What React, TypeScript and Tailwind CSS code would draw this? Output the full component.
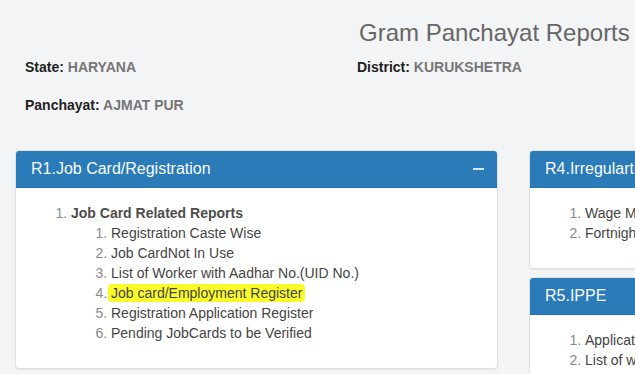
import React from "react";

interface Report {
  title: string;
  highlight?: boolean;
}

const jobCardReports: Report[] = [
  { title: "Registration Caste Wise" },
  { title: "Job CardNot In Use" },
  { title: "List of Worker with Aadhar No.(UID No.)" },
  { title: "Job card/Employment Register", highlight: true },
  { title: "Registration Application Register" },
  { title: "Pending JobCards to be Verified" },
];

const Panel: React.FC<{ title: string; collapsible?: boolean; className?: string; children: React.ReactNode }> = ({
  title,
  collapsible = false,
  className = "",
  children,
}) => (
  <div className={`rounded-[4px] border border-[#dfe2e5] bg-white shadow-[0_1px_2px_rgba(0,0,0,0.06)] ${className}`}>
    <div className="flex h-[37px] items-center justify-between rounded-t-[3px] border-b border-[#2773ad] bg-[#2b7bb9] px-[15px]">
      <h3 className="whitespace-nowrap text-[16px] leading-[18px] text-[#f7fafd]">{title}</h3>
      {collapsible && <span className="mr-[-2px] h-[2px] w-[11px] bg-[#d4e6f4]" />}
    </div>
    <div className="px-[15px] pb-[15px] pt-[15px]">{children}</div>
  </div>
);

const App: React.FC = () => {
  return (
    <div className="h-[374px] w-[635px] overflow-hidden bg-[#f3f4f5] font-['Liberation_Sans',Arial,sans-serif] text-[14px] leading-[20px]">
      {/* Header info */}
      <div className="grid grid-cols-[332px_1fr] px-[25px] pt-[20px]">
        <div />
        <h1 className="ml-[2px] whitespace-nowrap text-[24px] leading-[26px] text-[#666]">Gram Panchayat Reports</h1>

        <p className="mt-[11px] font-bold text-[#1f1f1f]">
          State: <span className="text-[#767676]">HARYANA</span>
        </p>
        <p className="mt-[11px] font-bold text-[#1f1f1f]">
          District: <span className="text-[#767676]">KURUKSHETRA</span>
        </p>

        <p className="col-span-2 mt-[18px] font-bold text-[#1f1f1f]">
          Panchayat: <span className="text-[#767676]">AJMAT PUR</span>
        </p>
      </div>

      {/* Report panels */}
      <div className="mt-[35px] flex items-start gap-[31px] pl-[15px]">
        <Panel title="R1.Job Card/Registration" collapsible className="w-[483px] shrink-0">
          <ol className="mb-[10px] list-decimal pl-[40px] text-[#444] marker:text-[#8a8a8a]">
            <li>
              <span className="font-bold text-[#4d4d4d]">Job Card Related Reports</span>
              <ol className="list-decimal pl-[40px]">
                {jobCardReports.map((r) => (
                  <li key={r.title}>
                    {r.highlight ? (
                      <span className="-ml-[3px] rounded-[4px] bg-[#fbfb2a] px-[3px] py-[1px]">{r.title}</span>
                    ) : (
                      r.title
                    )}
                  </li>
                ))}
              </ol>
            </li>
          </ol>
        </Panel>

        <div className="flex w-[260px] shrink-0 flex-col gap-[8px]">
          <Panel title="R4.Irregularties">
            <ol className="mb-[10px] list-decimal pl-[40px] text-[#444] marker:text-[#8a8a8a]">
              <li className="whitespace-nowrap">Wage Material Ratio</li>
              <li className="whitespace-nowrap">Fortnightly Report</li>
            </ol>
          </Panel>
          <Panel title="R5.IPPE">
            <ol className="mb-[10px] list-decimal pl-[40px] text-[#444] marker:text-[#8a8a8a]">
              <li className="whitespace-nowrap">Application Register</li>
              <li className="whitespace-nowrap">List of works</li>
            </ol>
          </Panel>
        </div>
      </div>
    </div>
  );
};

export default App;
